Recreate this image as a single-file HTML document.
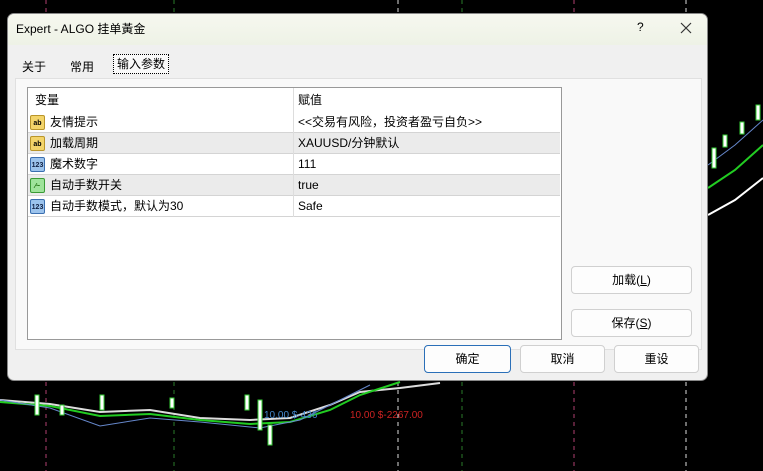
<!DOCTYPE html>
<html><head><meta charset="utf-8"><style>
*{margin:0;padding:0;box-sizing:border-box}
body{width:763px;height:471px;background:#000;position:relative;overflow:hidden;font-family:"Liberation Sans","Noto Sans CJK SC",sans-serif;font-size:12px;color:#000}
.dlg{position:absolute;left:7px;top:13px;width:701px;height:368px;background:#f0f0f0;border:1px solid #888;border-radius:7px;overflow:hidden}
.title{height:31px;background:linear-gradient(#f6f8ef,#eef2e6);position:relative}
.title span{position:absolute;left:8px;top:6px;font-size:12px}
.tab{position:absolute;top:0;height:22px;line-height:22px;font-size:12px;white-space:nowrap}
.panel{position:absolute;left:7px;top:64px;width:687px;height:272px;background:#f9f9f9;border:1px solid #e0e0e0}
.tbl{position:absolute;left:19px;top:73px;width:535px;height:253px;background:#fff;border:1px solid #999}
.row{position:absolute;left:0;width:532px;height:21px;border-bottom:1px solid #d4d4d4;line-height:21px}
.row .a{position:absolute;left:22px}
.row .b{position:absolute;left:270px}
.ic{position:absolute;left:2px;top:3px;width:15px;height:15px;border-radius:2px;font-size:7px;line-height:15px;text-align:center;font-weight:bold}
.btn{position:absolute;height:28px;background:#fdfdfd;border:1px solid #d0d0d0;border-radius:4px;text-align:center;line-height:26px;font-size:12px}
</style></head><body>
<svg style="position:absolute;left:0;top:0" width="763" height="471">
<g stroke-dasharray="4,4" stroke-width="1">
<line x1="46" y1="0" x2="46" y2="12" stroke="#b04070"/><line x1="174" y1="0" x2="174" y2="12" stroke="#2a7a2a"/>
<line x1="398" y1="0" x2="398" y2="12" stroke="#ddd"/><line x1="462" y1="0" x2="462" y2="12" stroke="#2a7a2a"/>
<line x1="574" y1="0" x2="574" y2="12" stroke="#b04070"/><line x1="686" y1="0" x2="686" y2="12" stroke="#ddd"/>
<line x1="46" y1="382" x2="46" y2="471" stroke="#b04070"/><line x1="174" y1="382" x2="174" y2="471" stroke="#2a7a2a"/>
<line x1="398" y1="382" x2="398" y2="471" stroke="#ddd"/><line x1="462" y1="382" x2="462" y2="471" stroke="#2a7a2a"/>
<line x1="574" y1="382" x2="574" y2="471" stroke="#b04070"/><line x1="686" y1="382" x2="686" y2="471" stroke="#ddd"/>
</g>
<polyline fill="none" stroke="#ddd" stroke-width="2" points="0,400 50,404 100,412 150,410 200,418 250,420 290,418 330,405 360,392 400,388 440,383"/>
<polyline fill="none" stroke="#2c2" stroke-width="2" points="0,402 50,406 100,416 150,414 200,420 250,424 290,422 330,410 360,395 400,382"/>
<polyline fill="none" stroke="#68c" stroke-width="1" points="0,400 50,408 100,426 150,418 200,422 260,428 300,420 340,400 370,385"/>
<polyline fill="none" stroke="#fff" stroke-width="2" points="708,215 735,200 763,178"/>
<polyline fill="none" stroke="#2c2" stroke-width="2" points="708,188 735,170 763,145"/>
<polyline fill="none" stroke="#68c" stroke-width="1" points="708,165 735,145 763,120"/>
<g fill="#fff" stroke="#3c3"><rect x="712" y="148" width="4" height="20"/><rect x="723" y="135" width="4" height="12"/><rect x="740" y="122" width="4" height="12"/><rect x="756" y="105" width="4" height="15"/>
<rect x="35" y="395" width="4" height="20"/><rect x="100" y="395" width="4" height="15"/><rect x="170" y="398" width="4" height="10"/><rect x="258" y="400" width="4" height="30"/><rect x="268" y="425" width="4" height="20"/><rect x="245" y="395" width="4" height="15"/><rect x="60" y="405" width="4" height="10"/></g>
<text x="264" y="418" font-size="10" fill="#48c" font-family="Liberation Sans">10.00 $-436</text>
<text x="350" y="418" font-size="10" fill="#c22" font-family="Liberation Sans">10.00 $-2267.00</text>
</svg>
<div class="dlg">
<div class="title"><span>Expert - ALGO 挂单黃金</span><span style="left:629px;top:6px">?</span>
<svg style="position:absolute;left:672px;top:8px" width="12" height="12"><path d="M1 1L11 11M11 1L1 11" stroke="#333" stroke-width="1.2"/></svg></div>
<div class="panel"></div>
<div class="tab" style="left:14px;top:42px">关于</div>
<div class="tab" style="left:62px;top:42px">常用</div>
<div class="tab" style="left:105px;top:40px;height:20px;line-height:18px;padding:0 3px;border:1px dotted #000;background:#f9f9f9">输入参数</div>
<div class="tbl">
<div class="row" style="top:0;height:24px;line-height:24px;border-bottom:none"><span style="position:absolute;left:7px">变量</span><span class="b">赋值</span><span style="position:absolute;left:265px;top:0;height:24px;border-left:1px solid #ddd"></span></div>
<div class="row" style="top:24px"><div class="ic" style="background:#f3d46a;border:1px solid #b9952a">ab</div><span class="a">友情提示</span><span class="b">&lt;&lt;交易有风险，投资者盈亏自负&gt;&gt;</span></div>
<div class="row" style="top:45px;background:#ebebeb"><div class="ic" style="background:#f3d46a;border:1px solid #b9952a">ab</div><span class="a">加载周期</span><span class="b">XAUUSD/分钟默认</span></div>
<div class="row" style="top:66px"><div class="ic" style="background:#9cc3ec;border:1px solid #3b6fb0;color:#124">123</div><span class="a">魔术数字</span><span class="b">111</span></div>
<div class="row" style="top:87px;background:#ebebeb"><div class="ic" style="background:#9ee39a;border:1px solid #3a9a36;color:#160">⁄~</div><span class="a">自动手数开关</span><span class="b">true</span></div>
<div class="row" style="top:108px"><div class="ic" style="background:#9cc3ec;border:1px solid #3b6fb0;color:#124">123</div><span class="a">自动手数模式，默认为30</span><span class="b">Safe</span></div>
<div style="position:absolute;left:265px;top:24px;height:105px;border-left:1px solid #ddd"></div>
</div>
<div class="btn" style="left:563px;top:252px;width:121px">加载(<u>L</u>)</div>
<div class="btn" style="left:563px;top:295px;width:121px">保存(<u>S</u>)</div>
<div class="btn" style="left:416px;top:331px;width:87px;border:1px solid #2a6fb8">确定</div>
<div class="btn" style="left:512px;top:331px;width:85px">取消</div>
<div class="btn" style="left:606px;top:331px;width:85px">重设</div>
</div>
</body></html>
